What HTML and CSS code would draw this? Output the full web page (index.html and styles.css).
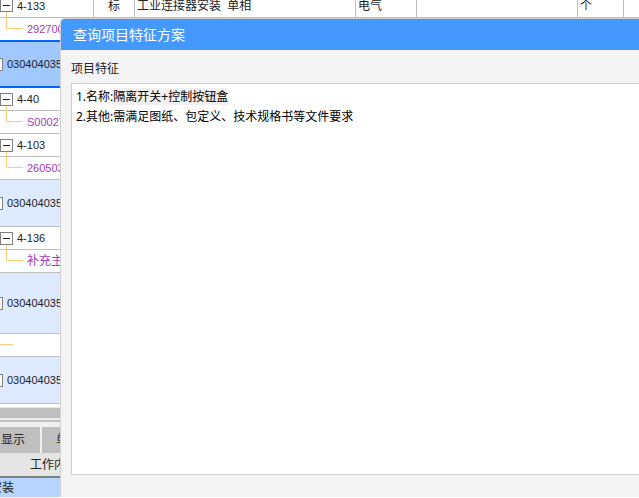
FILE: index.html
```
<!DOCTYPE html>
<html lang="zh-CN">
<head>
  <meta charset="UTF-8">
  <meta name="viewport" content="width=device-width, initial-scale=1.0">
  <title>查询项目特征方案</title>
  <link rel="stylesheet" href="styles.css">
</head>
<body>
  <!-- Bill of quantities -->
  <main class="sheet">
    <table class="bill">
      <colgroup>
        <col class="col-code">
        <col class="col-type">
        <col class="col-name">
        <col class="col-major">
        <col class="col-spec">
        <col class="col-unit">
        <col>
      </colgroup>
      <tbody>
        <tr class="top">
          <td><div class="code"><button class="toggle open" aria-label="折叠"></button>4-133</div></td>
          <td class="center">标</td>
          <td>工业连接器安装  单相</td>
          <td>电气</td>
          <td></td>
          <td>个</td>
          <td></td>
        </tr>
        <tr class="child before-selected">
          <td><div class="code"><svg class="branch" viewBox="0 0 23 22"><path d="M6.5 0V10.5H23"/></svg>292700</div></td>
          <td colspan="6"></td>
        </tr>
        <tr class="item selected">
          <td><div class="code"><input type="checkbox" class="check" aria-label="选择清单">030404035</div></td>
          <td colspan="6"></td>
        </tr>
        <tr>
          <td><div class="code"><button class="toggle open" aria-label="折叠"></button>4-40</div></td>
          <td colspan="6"></td>
        </tr>
        <tr class="child">
          <td><div class="code"><svg class="branch" viewBox="0 0 23 22"><path d="M6.5 0V10.5H23"/></svg>S00027</div></td>
          <td colspan="6"></td>
        </tr>
        <tr>
          <td><div class="code"><button class="toggle open" aria-label="折叠"></button>4-103</div></td>
          <td colspan="6"></td>
        </tr>
        <tr class="child">
          <td><div class="code"><svg class="branch" viewBox="0 0 23 22"><path d="M6.5 0V10.5H23"/></svg>260503</div></td>
          <td colspan="6"></td>
        </tr>
        <tr class="item">
          <td><div class="code"><input type="checkbox" class="check" aria-label="选择清单">030404035</div></td>
          <td colspan="6"></td>
        </tr>
        <tr>
          <td><div class="code"><button class="toggle open" aria-label="折叠"></button>4-136</div></td>
          <td colspan="6"></td>
        </tr>
        <tr class="child">
          <td><div class="code zh"><svg class="branch" viewBox="0 0 23 22"><path d="M6.5 0V10.5H23"/></svg>补充主</div></td>
          <td colspan="6"></td>
        </tr>
        <tr class="item tall">
          <td><div class="code"><input type="checkbox" class="check" aria-label="选择清单">030404035</div></td>
          <td colspan="6"></td>
        </tr>
        <tr>
          <td><div class="code"><svg class="branch" viewBox="0 0 23 22"><path d="M0 10.5H13"/></svg></div></td>
          <td colspan="6"></td>
        </tr>
        <tr class="item">
          <td><div class="code"><input type="checkbox" class="check" aria-label="选择清单">030404035</div></td>
          <td colspan="6"></td>
        </tr>
      </tbody>
    </table>

    <div class="scrollbar"></div>

    <!-- Detail pane -->
    <nav class="tabs">
      <button class="tab first">显示</button>
      <button class="tab">单价</button>
    </nav>
    <table class="detail">
      <thead>
        <tr><th>工作内容</th></tr>
      </thead>
      <tbody>
        <tr><td><div class="clip">安装</div></td></tr>
      </tbody>
    </table>
  </main>

  <!-- Dialog -->
  <section class="dialog" role="dialog" aria-labelledby="dialogTitle">
    <h1 id="dialogTitle">查询项目特征方案</h1>
    <div class="dialog-body">
      <h2 id="featureLabel">项目特征</h2>
      <div class="editor" role="textbox" aria-multiline="true" aria-labelledby="featureLabel" contenteditable="true" spellcheck="false">
        <p>1.名称:<mark>隔离开关+控制按钮盒</mark></p>
        <p>2.其他:需满足图纸、包定义、技术规格书等文件要求</p>
      </div>
    </div>
  </section>
</body>
</html>
```
FILE: styles.css
```
* {
  box-sizing: border-box;
}

html,
body {
  height: 100%;
}

body {
  margin: 0;
  position: relative;
  overflow: hidden;
  background: #fff;
  color: #222;
  font-family: "Noto Sans", "Noto Sans CJK SC", sans-serif;
  font-size: 12px;
  line-height: 20px;
}

button {
  font: inherit;
  color: inherit;
}

/* the list is scrolled part way into its first row */
.sheet {
  margin-top: -6px;
}

.bill {
  width: 100%;
  table-layout: fixed;
  border-collapse: separate;
  border-spacing: 0;
  line-height: 12px;
}

.col-code { width: 94px; }
.col-type { width: 41px; }
.col-name { width: 221px; }
.col-major { width: 61px; }
.col-spec { width: 161px; }
.col-unit { width: 46px; }

.bill td {
  height: 23px;
  padding: 0 2px;
  border-right: 1px solid #bfbfbf;
  border-bottom: 1px solid #bfbfbf;
  white-space: pre;
}

.bill .top td {
  height: 24px;
}

.bill td:first-child {
  padding: 0;
}

.bill td:last-child {
  border-right: 0;
}

.bill .center {
  text-align: center;
}

.code {
  display: flex;
  align-items: center;
  height: 22px;
  font-family: "Liberation Sans", "Noto Sans CJK SC", sans-serif;
  font-size: 11px;
}

.code.zh {
  font-size: 12px;
}

.toggle {
  position: relative;
  flex: none;
  width: 13px;
  height: 13px;
  margin: 0 4px 0 0;
  padding: 0;
  border: 1px solid #808080;
  background: #fff;
}

.toggle::before {
  content: "";
  position: absolute;
  left: 2px;
  top: 5px;
  width: 7px;
  height: 1px;
  background: #222;
}

/* stem that joins the branch in the row below */
.toggle.open::after {
  content: "";
  position: absolute;
  left: 5px;
  top: 12px;
  width: 1px;
  height: 6px;
  background: #ffc97a;
}

.branch {
  flex: none;
  width: 23px;
  height: 22px;
  margin-right: 4px;
  fill: none;
  stroke: #ffc97a;
  stroke-width: 1;
}

.child .code {
  color: #a03cb4;
}

.bill .before-selected td {
  height: 22px;
  border-bottom: 0;
}

.bill .item td {
  height: 47px;
  background: #deeaff;
}

.bill .tall td {
  height: 61px;
}

.bill .selected td {
  height: 48px;
  background: #a1c8ff;
  border-top: 2px solid #0066ff;
  border-bottom: 2px solid #0066ff;
}

.check {
  appearance: none;
  flex: none;
  width: 13px;
  height: 13px;
  margin: 0 4px 0 -10px;
  border: 1px solid #808080;
  background: #fff;
}

.scrollbar {
  height: 15px;
  margin-top: 3px;
  border-top: 1px solid #e8e8e8;
  border-bottom: 2px solid #bfbfbf;
  background: linear-gradient(#bfbfbf 10px, #ececec 10px);
}

.tabs {
  display: flex;
  gap: 2px;
  padding-top: 5px;
  background: #f0f0f0;
}

.tab {
  height: 26px;
  padding: 0 14px;
  border: 0;
  background: #bfbfbf;
}

.tab.first {
  width: 40px;
  padding: 0 1px;
  text-align: left;
}

.detail {
  width: 100%;
  border-spacing: 0;
}

.detail th {
  height: 25px;
  padding: 0 0 0 30px;
  border-bottom: 2px solid #808080;
  background: #e5e5e5;
  font-weight: normal;
  text-align: left;
}

.detail td {
  height: 19px;
  padding: 0;
  background: #b5d5ff;
}

.clip {
  display: flex;
  justify-content: flex-end;
  width: 14px;
  height: 18px;
  line-height: 18px;
  white-space: nowrap;
}

.dialog {
  position: absolute;
  top: 18px;
  right: 0;
  bottom: 1px;
  left: 60px;
  display: flex;
  flex-direction: column;
  border-top: 1px solid #d0d0d0;
  border-left: 1px solid #d0d0d0;
  border-top-left-radius: 5px;
  background: #f4f4f4;
  overflow: hidden;
}

.dialog h1 {
  margin: 0;
  padding: 1px 12px 0;
  background: #4499ff;
  color: #fff;
  font-size: 14px;
  font-weight: normal;
  line-height: 30px;
}

.dialog-body {
  flex: 1;
  display: flex;
  flex-direction: column;
  padding: 9px 0 22px 10px;
}

.dialog h2 {
  margin: 0 0 4px;
  font-size: 12px;
  font-weight: normal;
  line-height: 20px;
}

.editor {
  flex: 1;
  padding: 3px 4px;
  border: 1px solid #cfcfcf;
  border-right: 0;
  background: #fff;
  color: #000;
  outline: none;
}

.editor p {
  margin: 0;
}

.editor mark {
  background: #f0f0f0;
  color: inherit;
}
```
